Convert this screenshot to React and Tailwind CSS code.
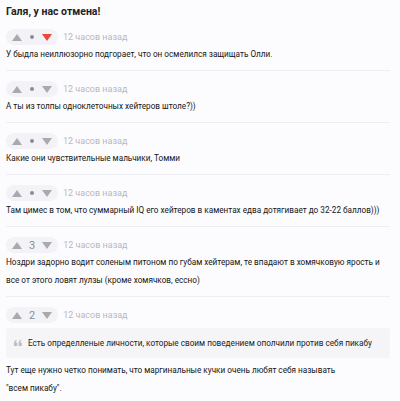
import React from 'react';

const comments = [
  { rating: null, minus: true, text: ['У быдла неиллюзорно подгорает, что он осмелился защищать Олли.'] },
  { rating: null, text: ['А ты из толпы одноклеточных хейтеров штоле?))'] },
  { rating: null, text: ['Какие они чувствительные мальчики, Томми'] },
  { rating: null, text: ['Там цимес в том, что суммарный IQ его хейтеров в каментах едва дотягивает до 32-22 баллов)))'] },
  {
    rating: 3,
    text: [
      'Ноздри задорно водит соленым питоном по губам хейтерам, те впадают в хомячковую ярость и',
      'все от этого ловят лулзы (кроме хомячков, ессно)',
    ],
  },
  {
    rating: 2,
    quote: 'Есть определленые личности, которые своим поведением ополчили против себя пикабу',
    text: ['Тут еще нужно четко понимать, что маргинальные кучки очень любят себя называть', '"всем пикабу".'],
  },
];

function Up() {
  return (
    <svg width="10" height="7" viewBox="0 0 10 7">
      <path d="M5 0L10 7H0z" fill="#a9a9b0" />
    </svg>
  );
}

function Down({ red }) {
  return (
    <svg width="10" height="7" viewBox="0 0 10 7">
      <path d="M0 0h10L5 7z" fill={red ? '#e8493b' : '#a9a9b0'} />
    </svg>
  );
}

function QuoteIcon() {
  return (
    <svg width="8" height="6" viewBox="0 0 8 6">
      <path d="M0 6V3.2C0 1.4 0.9 0.3 2.6 0l0.3 0.8C2 1.1 1.6 1.7 1.6 2.6H3.2V6z" fill="#bcbcc4" />
      <path d="M4.6 6V3.2C4.6 1.4 5.5 0.3 7.2 0l0.3 0.8C6.6 1.1 6.2 1.7 6.2 2.6H7.8V6z" fill="#bcbcc4" />
    </svg>
  );
}

function Comment({ c, last }) {
  return (
    <div className={`pt-[10px] ${last ? 'pb-[7px]' : 'pb-[7px] border-b border-[#eeeef2]'}`}>
      <div className="flex items-center gap-[5px]">
        <div className="flex items-center h-[16px] px-[6px] gap-[8px] rounded-[8px] bg-[#f3f3f7]">
          <Up />
          {c.rating == null ? (
            <span className="w-[4px] h-[4px] rounded-full bg-[#8c8c94]" />
          ) : (
            <span className="text-[11px] leading-none text-[#8c8c94] -mx-[1px]">{c.rating}</span>
          )}
          <Down red={c.minus} />
        </div>
        <span className="text-[9px] leading-none text-[#b8b8c0]">12 часов назад</span>
      </div>
      {c.quote && (
        <div className="mt-[5px] mb-[3px] flex items-center gap-[6px] bg-[#f5f5f8] rounded-[3px] h-[30px] px-[8px]">
          <QuoteIcon />
          <span className="text-[8.2px] text-[#222]">{c.quote}</span>
        </div>
      )}
      <div className="text-[8.2px] leading-[18px] text-[#151515]">
        {c.text.map((t, i) => (
          <div key={i}>{t}</div>
        ))}
      </div>
    </div>
  );
}

export default function App() {
  return (
    <div className="w-[400px] h-[401px] bg-[#fcfcfe] overflow-hidden" style={{ fontFamily: 'Roboto, sans-serif' }}>
      <div className="pl-[6px] pr-[10px]">
        <div className="pt-[4px] text-[10.5px] font-bold text-[#222] leading-[15px]">Галя, у нас отмена!</div>
        <div>
          {comments.map((c, i) => (
            <Comment key={i} c={c} last={i === comments.length - 1} />
          ))}
        </div>
      </div>
    </div>
  );
}
